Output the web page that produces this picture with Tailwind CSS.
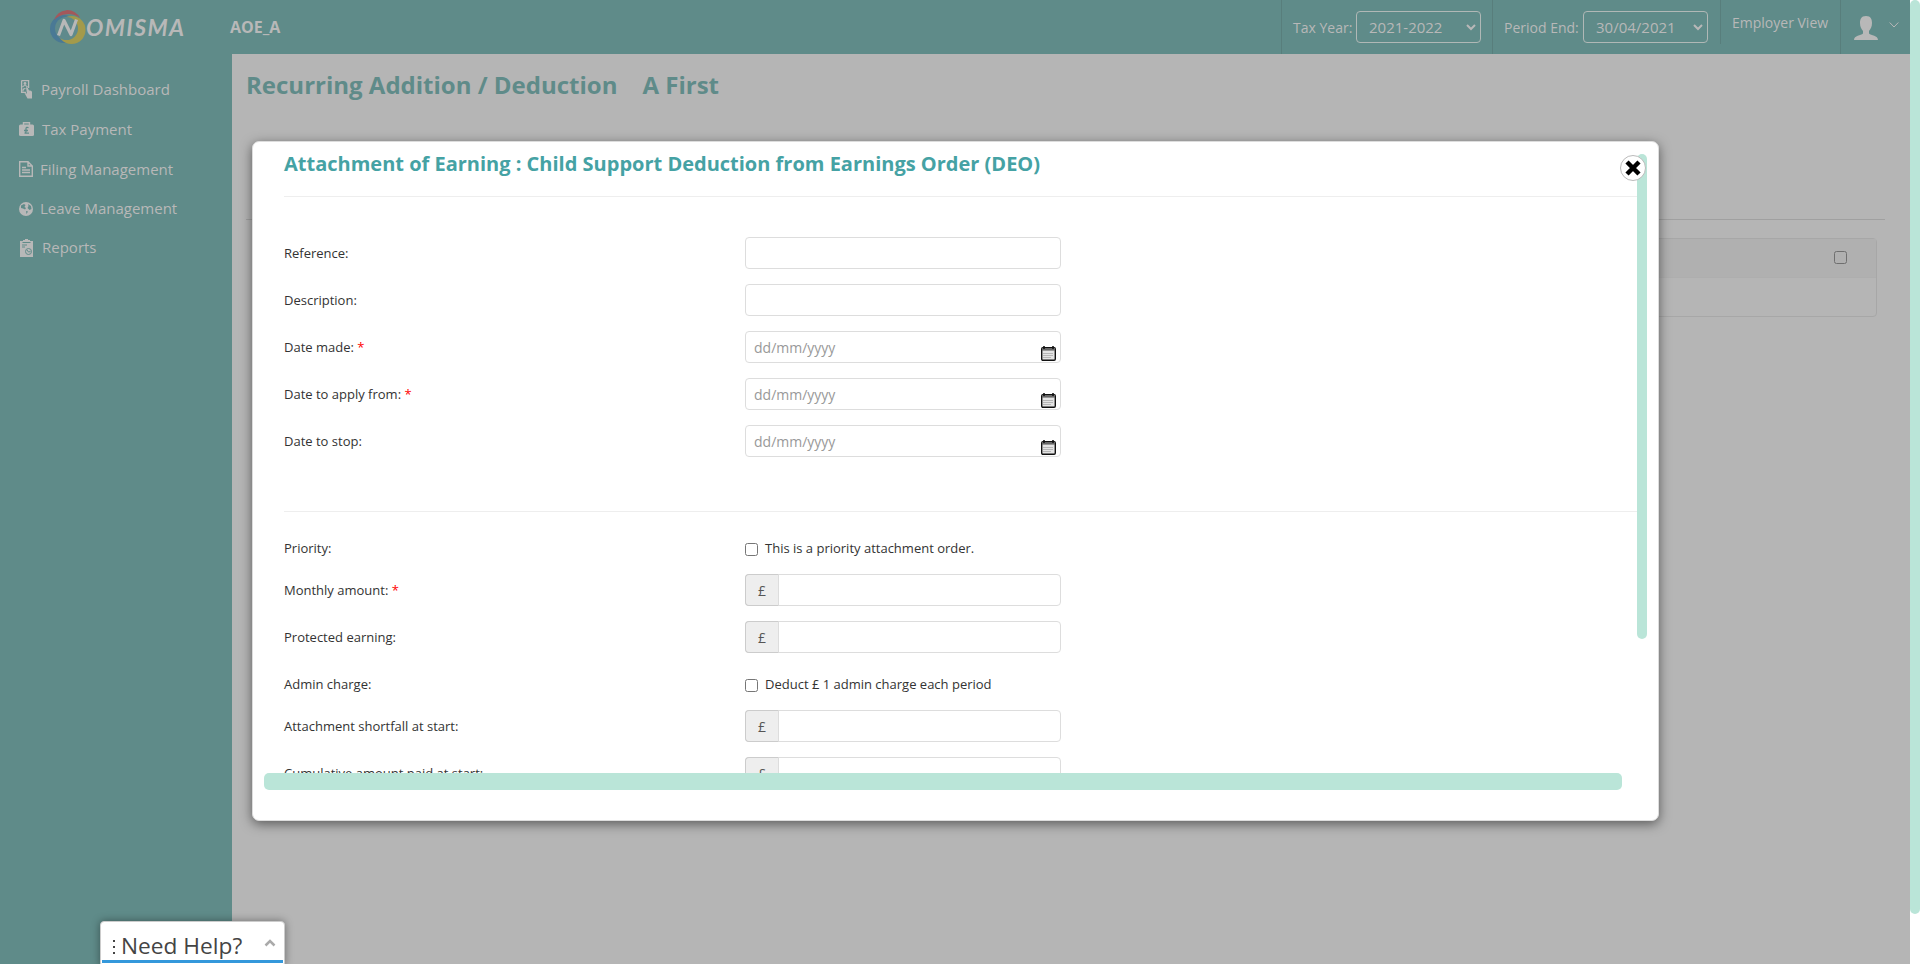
<!DOCTYPE html>
<html lang="en">
<head>
<meta charset="utf-8">
<title>Nomisma Payroll</title>
<script src="https://cdn.jsdelivr.net/npm/@tailwindcss/browser@4"></script>
</head>
<body class="relative h-[964px] w-[1920px] overflow-hidden bg-[#b5b5b5] font-['Open_Sans',sans-serif] text-[#b8b8b8]">
<svg class="hidden">
  <symbol id="cal" viewBox="0 0 15 15"><rect x=".7" y="1.700" width="13.600" height="12.600" rx="1.200" fill="#e4e4e4" stroke="#111" stroke-width="1.400"/><rect x="1" y="2" width="13" height="2.600" fill="#666"/><path d="M3 0v3M12 0v3" stroke="#111" stroke-width="1.600"/><path d="M2.500 7.500h10M2.500 9.500h10M2.500 11.500h8" stroke="#888" stroke-dasharray="1 1"/></symbol>
</svg>
<div class="flex h-full">
  <div class="flex w-[1910px] flex-col">
    <header class="flex h-[54px] shrink-0 bg-[#5f8b89]">
      <div class="w-[230px] pl-12 pt-2">
        <svg class="h-[38px] w-[150px]" viewBox="0 0 150 38">
          <circle cx="16" cy="21" r="14" fill="#4a7995"/>
          <circle cx="23.500" cy="22" r="14" fill="#a39a4b"/>
          <path d="M6 12A14 14 0 0 1 32 10A20 20 0 0 0 6 12Z" fill="#a3585b"/>
          <circle cx="18.500" cy="20.500" r="11.500" fill="#5f8a8c"/>
          <path d="M10.500 27.500L16 12.500L23 26.500L28.500 11.500" fill="none" stroke="#b8b8b8" stroke-width="3.200" stroke-linejoin="round"/>
          <text x="38" y="27.500" font-size="23" font-weight="700" font-style="italic" textLength="98" fill="#b8b8b8" font-family="Lato">OMISMA</text>
        </svg>
      </div>
      <div class="w-[1051px] pt-[15px] text-base leading-6 font-bold">AOE_A</div>
      <div class="flex w-[211px] items-center border-l border-[#587e7c] pl-[11px] text-[14px]">
        <span class="w-[63px] whitespace-nowrap pt-px">Tax Year:</span>
        <span class="flex h-8 w-[125px] items-center justify-between rounded border border-[#b0b8b6] pr-1 pl-3 text-[15px]">2021-2022<svg class="size-[10px]" viewBox="0 0 10 10"><path d="M1 3l4 4 4-4" fill="none" stroke="#b8b8b8" stroke-width="2"/></svg></span>
      </div>
      <div class="flex w-[228px] items-center border-l border-[#587e7c] pl-[11px] text-[14px]">
        <span class="w-[79px] whitespace-nowrap pt-px">Period End:</span>
        <span class="flex h-8 w-[125px] items-center justify-between rounded border border-[#b0b8b6] pr-1 pl-3 text-[15px]">30/04/2021<svg class="size-[10px]" viewBox="0 0 10 10"><path d="M1 3l4 4 4-4" fill="none" stroke="#b8b8b8" stroke-width="2"/></svg></span>
      </div>
      <div class="h-[44px] w-[120px] border-l border-[#587e7c] pt-[13px] pl-[11px] text-[14px] leading-5">Employer View</div>
      <div class="flex w-[70px] border-l border-[#587e7c] pt-4 pl-[13px]">
        <svg class="h-6 w-6" viewBox="0 0 24 24"><path d="M12 0C7 0 6 3.500 6 7c0 4 1.500 6 3 8v2.500C7 19.500 0 19.500 0 24h24c0-4.500-7-4.500-9-6.500V15c1.500-2 3-4 3-8 0-3.500-1-7-6-7Z" fill="#b8b8b8"/></svg>
        <svg class="mt-1 ml-[11px] size-[10px]" viewBox="0 0 10 10"><path d="M.7 2.500l4.300 4.500 4.300-4.500" fill="none" stroke="#b8b8b8"/></svg>
      </div>
    </header>
    <div class="flex grow">
      <nav class="w-[232px] bg-[#5f8b89] pt-[15px] text-[15px]">
        <div class="flex h-10 items-center pl-[20px]"><span class="w-[21px]"><svg class="h-[19px] w-[14px]" viewBox="0 0 14 19"><path d="M1.600.6h7v7.500M6 12.400H1.600V.6" fill="none" stroke="#b8b8b8" stroke-width="1.300"/><circle cx="5" cy="3.500" r="1.400" fill="#b8b8b8"/><path d="M2.500 7q2.500-3 5 0M3 11.500q-.5-3 2.500-3" fill="none" stroke="#b8b8b8" stroke-width="1.200"/><path d="M6 7.500q1.200-.8 1.800.5L9 10.500q3.500-.5 3 3V18.500H7.500L4.500 13l2.500.5Z" fill="#b8b8b8"/></svg></span>Payroll Dashboard</div>
        <div class="flex h-10 items-center pl-[19px]"><span class="w-[23px]"><svg class="h-[14px] w-[15px]" viewBox="0 0 15 14"><path d="M4.500 3V.7h6V3" fill="none" stroke="#b8b8b8" stroke-width="1.400"/><rect y="2.500" width="15" height="11.500" rx="1.500" fill="#b8b8b8"/><path d="M9.500 5.700q-2.500-1-2.500 1v3q-.3 1.500-1.500 1.500H10M5 8.500h4" fill="none" stroke="#5f8b89" stroke-width="1.300"/></svg></span>Tax Payment</div>
        <div class="flex h-10 items-center pl-[19px]"><span class="w-[21px]"><svg class="h-[16px] w-[14px]" viewBox="0 0 14 16"><path d="M.7.700h8.300l4.300 4.300v10.300H.7ZM9 1v4h4M3 6.500h4M3 9h8M3 11.500h8" fill="none" stroke="#b8b8b8" stroke-width="1.400"/></svg></span>Filing Management</div>
        <div class="flex h-[39px] items-center pl-[19px]"><span class="w-[21px]"><svg class="size-[14px]" viewBox="0 0 14 14"><circle cx="7" cy="7" r="7" fill="#b8b8b8"/><path d="M2 3.500l3-1.500 1.500 1-1 2 1.500 1-1 1.500-2-1-2-.5ZM9 2l3 2 .5 3-2 1-2-2 1-2ZM7 9l2 .5-1.500 2.500Z" fill="#5f8b89"/></svg></span>Leave Management</div>
        <div class="flex h-[39px] items-center pl-5"><span class="w-[22px]"><svg class="h-[18px] w-[13px]" viewBox="0 0 13 18"><path d="M0 2h3V1h2V0h3v1h2v1h3v16H0Z" fill="#b8b8b8"/><path d="M2.500 3.500h8M2 6h5M2 8h3" stroke="#5f8b89"/><circle cx="8.500" cy="12.500" r="3" fill="none" stroke="#5f8b89"/><path d="M7 11l1.500 2 2-.5" fill="none" stroke="#5f8b89"/></svg></span>Reports</div>
      </nav>
      <main class="grow">
        <h1 class="h-[165px] pt-[13px] pl-[14px] text-[24px] leading-9 font-bold whitespace-pre text-[#5f8b89]">Recurring Addition / Deduction<span class="pl-[25px]">A First</span></h1>
        <div class="ml-[14px] h-[19px] w-[1639px] border-t border-[#a0a0a0]"></div>
        <div class="ml-6 h-[79px] w-[1621px] rounded border border-[#a7a7a7]">
          <div class="flex h-[39px] justify-end border-b border-[#aeaeae] bg-[#b0b0b0] pt-3 pr-[29px]"><span class="size-[13px] rounded-[2.5px] border border-[#6f6f6f]"></span></div>
        </div>
      </main>
    </div>
  </div>
  <div class="w-[10px] bg-white"><div class="h-[914px] rounded-full bg-[#bae5d8]"></div></div>
</div>

<section class="absolute top-[141px] left-[252px] h-[680px] w-[1407px] rounded-[7px] border border-[#ddd] bg-white text-[13px] text-[#333] shadow-[0_3px_12px_rgba(0,0,0,.5)]">
  <div class="flex h-[631px] overflow-hidden pl-[31px]">
    <div class="w-[1353px] shrink-0">
      <h2 class="h-[55px] border-b border-[#eee] pt-[7px] text-[20px] leading-[30px] font-bold text-[#45a2a4]">Attachment of Earning : Child Support Deduction from Earnings Order (DEO)</h2>
      <div class="flex h-[315px] flex-col gap-[15px] border-b border-[#eee] pt-[40px]">
        <div class="flex h-8 items-center"><span class="w-[461px] pt-0.5">Reference:</span><span class="h-8 w-[316px] rounded border border-[#ddd]"></span></div>
        <div class="flex h-8 items-center"><span class="w-[461px] pt-0.5">Description:</span><span class="h-8 w-[316px] rounded border border-[#ddd]"></span></div>
        <div class="flex h-8 items-center"><span class="w-[461px] pt-0.5">Date made: <span class="text-[#f00]">*</span></span><span class="flex h-8 w-[316px] items-center justify-between rounded border border-[#ddd] pr-1 pl-2 text-[14px] text-[#999]">dd/mm/yyyy<svg class="mt-[13px] size-[15px]"><use href="#cal"/></svg></span></div>
        <div class="flex h-8 items-center"><span class="w-[461px] pt-0.5">Date to apply from: <span class="text-[#f00]">*</span></span><span class="flex h-8 w-[316px] items-center justify-between rounded border border-[#ddd] pr-1 pl-2 text-[14px] text-[#999]">dd/mm/yyyy<svg class="mt-[13px] size-[15px]"><use href="#cal"/></svg></span></div>
        <div class="flex h-8 items-center"><span class="w-[461px] pt-0.5">Date to stop:</span><span class="flex h-8 w-[316px] items-center justify-between rounded border border-[#ddd] pr-1 pl-2 text-[14px] text-[#999]">dd/mm/yyyy<svg class="mt-[13px] size-[15px]"><use href="#cal"/></svg></span></div>
      </div>
      <div class="pt-[26px]">
        <div class="flex h-[36px] items-start"><span class="w-[461px] leading-5">Priority:</span><span class="mt-[5px] mr-[7px] size-[13px] rounded-[2.5px] border border-[#767676]"></span><span class="leading-5">This is a priority attachment order.</span></div>
        <div class="flex h-[47px] items-start"><span class="w-[461px] leading-8">Monthly amount: <span class="text-[#f00]">*</span></span><span class="flex h-8 w-[316px] rounded border border-[#ddd]"><span class="-my-px -ml-px flex w-[34px] items-center justify-center rounded-l border border-[#ccc] border-r-[#ddd] bg-[#eee] text-[14px] text-[#555]">£</span></span></div>
        <div class="flex h-[47px] items-start"><span class="w-[461px] leading-8">Protected earning:</span><span class="flex h-8 w-[316px] rounded border border-[#ddd]"><span class="-my-px -ml-px flex w-[34px] items-center justify-center rounded-l border border-[#ccc] border-r-[#ddd] bg-[#eee] text-[14px] text-[#555]">£</span></span></div>
        <div class="flex h-[42px] items-start pt-[6px]"><span class="w-[461px] leading-5">Admin charge:</span><span class="mt-[5px] mr-[7px] size-[13px] rounded-[2.5px] border border-[#767676]"></span><span class="leading-5">Deduct £ 1 admin charge each period</span></div>
        <div class="flex h-[47px] items-start"><span class="w-[461px] leading-8">Attachment shortfall at start:</span><span class="flex h-8 w-[316px] rounded border border-[#ddd]"><span class="-my-px -ml-px flex w-[34px] items-center justify-center rounded-l border border-[#ccc] border-r-[#ddd] bg-[#eee] text-[14px] text-[#555]">£</span></span></div>
        <div class="flex h-[47px] items-start"><span class="w-[461px] leading-8">Cumulative amount paid at start:</span><span class="flex h-8 w-[316px] rounded border border-[#ddd]"><span class="-my-px -ml-px flex w-[34px] items-center justify-center rounded-l border border-[#ccc] border-r-[#ddd] bg-[#eee] text-[14px] text-[#555]">£</span></span></div>
      </div>
    </div>
    <div class="mt-3 h-[485px] w-[10px] rounded-full bg-[#bae5d8]"></div>
  </div>
  <div class="ml-[11px] h-[17px] w-[1358px] rounded-[5px] bg-[#bae5d8]"></div>
  <div class="absolute top-[13px] left-[1367px] flex size-[26px] items-center justify-center rounded-full border border-[#bbb] bg-white"><svg class="size-4" viewBox="0 0 16 16"><path d="M2 2l12 12M14 2L2 14" stroke="#000" stroke-width="4.500"/></svg></div>
</section>

<div class="absolute top-[921px] left-[100px] h-[46px] w-[185px] rounded-[4px] border border-[#ccc] bg-white px-px shadow-[0_0_8px_rgba(0,0,0,.4)]">
  <div class="flex h-[38px] items-center pl-[11px] text-[#444]">
    <span class="mt-3 flex flex-col gap-1"><i class="size-[2px] bg-[#444]"></i><i class="size-[2px] bg-[#444]"></i><i class="size-[2px] bg-[#444]"></i></span>
    <span class="ml-[6px] w-[122px] pt-2.5 text-[22.7px] leading-7 whitespace-nowrap">Need Help?</span>
    <svg class="mt-[3px] ml-[21px] h-2 w-[12px]" viewBox="0 0 12 8"><path d="M1.500 6.500l4.500-4.500 4.500 4.500" fill="none" stroke="#aaa" stroke-width="2.500"/></svg>
  </div>
  <div class="h-[3px] bg-[#3498db]"></div>
</div>
</body>
</html>
